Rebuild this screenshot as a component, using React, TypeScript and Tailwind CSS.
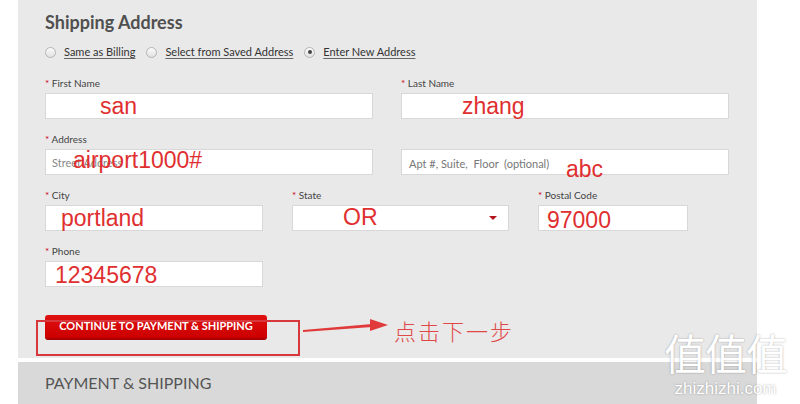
import React from 'react'

const Label = ({ text }: { text: string }) => (
  <div className="h-[12px] leading-[12px] text-[10px] text-[#444] mb-[4px] whitespace-nowrap">
    <span className="text-[#d0021b]">*</span> {text}
  </div>
)

const Typed = ({ text, left, top }: { text: string; left: number; top: number }) => (
  <span
    className="absolute whitespace-nowrap text-[23px] leading-[23px] text-[#e02f2f] font-['Liberation_Sans',Arial,sans-serif]"
    style={{ left, top }}
  >
    {text}
  </span>
)

const Box = ({ w, children }: { w: string; children?: React.ReactNode }) => (
  <div className={`relative h-[26px] bg-white border border-[#d8d8d8] ${w}`}>{children}</div>
)

const Radio = ({ label, checked }: { label: string; checked?: boolean }) => (
  <label className="flex items-center gap-[8px] text-[11px] text-[#333]">
    <span className="w-[11px] h-[11px] rounded-full border border-[#b4b4b4] bg-gradient-to-b from-[#fafafa] to-[#e2e2e2] flex items-center justify-center">
      {checked && <span className="w-[4px] h-[4px] rounded-full bg-[#444]" />}
    </span>
    <span className="underline underline-offset-2 decoration-[#666]">{label}</span>
  </label>
)

const App = () => {
  return (
    <div className="relative w-[800px] h-[404px] bg-white overflow-hidden font-['Lato',sans-serif]">
      <div className="relative ml-[18px] w-[739px] h-[358px] bg-[#e9e9e9] pl-[27px] pt-[12px]">
        <h2 className="h-[20px] leading-[20px] text-[18px] font-bold text-[#505050]">Shipping Address</h2>

        <div className="mt-[13px] h-[14px] flex items-center gap-[11px]">
          <Radio label="Same as Billing" />
          <Radio label="Select from Saved Address" />
          <Radio label="Enter New Address" checked />
        </div>

        <div className="mt-[18px] flex gap-[28px]">
          <div>
            <Label text="First Name" />
            <Box w="w-[328px]">
              <Typed text="san" left={54} top={1} />
            </Box>
          </div>
          <div>
            <Label text="Last Name" />
            <Box w="w-[328px]">
              <Typed text="zhang" left={60} top={1} />
            </Box>
          </div>
        </div>

        <div className="mt-[14px] flex gap-[28px]">
          <div>
            <Label text="Address" />
            <Box w="w-[328px]">
              <span className="absolute left-[6px] top-[5px] text-[11px] text-[#888]">Street Address</span>
              <Typed text="airport1000#" left={27} top={-1} />
            </Box>
          </div>
          <div>
            <div className="h-[12px] mb-[4px]" />
            <Box w="w-[328px]">
              <span className="absolute left-[7px] top-[6px] text-[11px] text-[#777] whitespace-nowrap">
                Apt #, Suite,&nbsp; Floor&nbsp; (optional)
              </span>
              <Typed text="abc" left={164} top={8} />
            </Box>
          </div>
        </div>

        <div className="mt-[14px] flex">
          <div>
            <Label text="City" />
            <Box w="w-[218px]">
              <Typed text="portland" left={15} top={1} />
            </Box>
          </div>
          <div className="ml-[29px]">
            <Label text="State" />
            <Box w="w-[217px]">
              <Typed text="OR" left={50} top={0} />
              <span className="absolute right-[11px] top-[10px] w-0 h-0 border-l-[4px] border-r-[4px] border-t-[4px] border-l-transparent border-r-transparent border-t-[#b3141b]" />
            </Box>
          </div>
          <div className="ml-[29px]">
            <Label text="Postal Code" />
            <Box w="w-[150px]">
              <Typed text="97000" left={8} top={3} />
            </Box>
          </div>
        </div>

        <div className="mt-[14px]">
          <Label text="Phone" />
          <Box w="w-[218px]">
            <Typed text="12345678" left={9} top={2} />
          </Box>
        </div>

        <button className="mt-[28px] w-[222px] h-[25px] rounded-[3px] bg-gradient-to-b from-[#e01010] to-[#cc0000] border-b-2 border-[#a80000] text-white text-[11px] font-bold flex items-center justify-center">
          CONTINUE TO PAYMENT &amp; SHIPPING
        </button>

        {/* annotation overlay */}
        <div className="absolute left-[18px] top-[320px] w-[264px] h-[36px] border-2 border-[#d8383b]" />
        <svg className="absolute left-[284px] top-[316px]" width="90" height="20" viewBox="0 0 90 20">
          <polygon points="1,14 70,8 70,11 1,16" fill="#e03a3a" />
          <polygon points="68,3 86,9 68,15" fill="#e03a3a" />
        </svg>
        <div className="absolute left-[376px] top-[316px] text-[22px] leading-[28px] font-light text-[#e04848] font-['Noto_Sans_CJK_SC',sans-serif] tracking-[2px]">
          点击下一步
        </div>
      </div>

      <div className="ml-[18px] mt-[4px] w-[739px] h-[42px] bg-[#d9d9d9] pl-[27px] flex items-center">
        <span className="text-[16px] text-[#555]">PAYMENT &amp; SHIPPING</span>
      </div>

      {/* watermark */}
      <div className="absolute left-[664px] top-[331px] flex flex-col items-center text-white [text-shadow:0_0_2px_rgba(0,0,0,0.35)]">
        <span className="text-[42px] leading-[42px] font-['Noto_Sans_CJK_SC',sans-serif] tracking-[-1px]">值值值</span>
        <span className="text-[17px] leading-[18px] font-['Liberation_Sans',sans-serif] mt-[7px]">zhizhizhi.com</span>
      </div>
    </div>
  )
}

export default App
